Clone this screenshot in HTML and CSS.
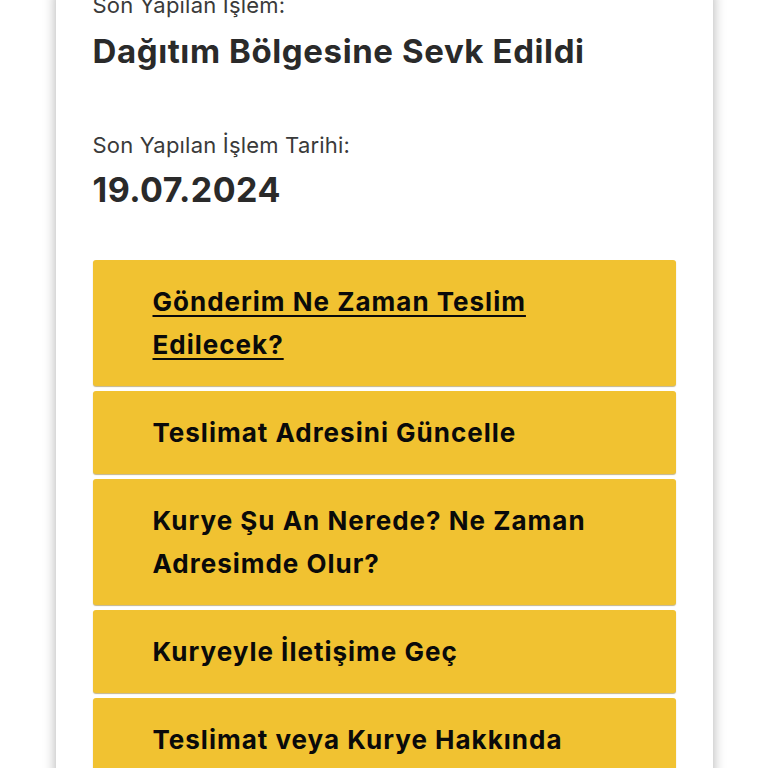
FILE: index.html
```html
<!DOCTYPE html>
<html lang="tr">
<head>
<meta charset="utf-8">
<title>Gönderi Takip</title>
<link rel="stylesheet" href="styles.css">
</head>
<body>
<main class="card">
  <section class="info">
    <div class="field">
      <div class="label">Son Yapılan İşlem:</div>
      <div class="value">Dağıtım Bölgesine Sevk Edildi</div>
    </div>
    <div class="field">
      <div class="label">Son Yapılan İşlem Tarihi:</div>
      <div class="value date">19.07.2024</div>
    </div>
  </section>
  <nav class="actions">
    <a class="action link" href="#">Gönderim Ne Zaman Teslim Edilecek?</a>
    <a class="action" href="#">Teslimat Adresini Güncelle</a>
    <a class="action" href="#">Kurye Şu An Nerede? Ne Zaman Adresimde Olur?</a>
    <a class="action" href="#">Kuryeyle İletişime Geç</a>
    <a class="action" href="#">Teslimat veya Kurye Hakkında</a>
  </nav>
</main>
</body>
</html>
```

FILE: styles.css
```css
html, body {
  margin: 0;
  padding: 0;
  background: #ffffff;
}

body {
  font-family: Inter, "Noto Sans", "DejaVu Sans", sans-serif;
  overflow: hidden;
  height: 768px;
}

.card {
  width: 583px;
  margin: -9px auto 0;
  padding: 0 37px 40px;
  background: #ffffff;
  box-shadow: 0 0 12px rgba(0, 0, 0, 0.32);
  min-height: 900px;
}

.info {
  display: flex;
  flex-direction: column;
  gap: 60px;
}

.field {
  display: flex;
  flex-direction: column;
}

.label {
  font-size: 22px;
  line-height: 28px;
  letter-spacing: 0.2px;
  color: #3a3a3a;
  font-weight: 400;
}

.value {
  margin-top: 12px;
  font-size: 33px;
  line-height: 40px;
  letter-spacing: 0.6px;
  font-weight: 700;
  color: #2a2a2a;
}

.value.date {
  margin-top: 11px;
  font-size: 34px;
  letter-spacing: 0.5px;
}

.actions {
  margin-top: 50px;
  display: flex;
  flex-direction: column;
  gap: 5px;
}

.action {
  display: block;
  padding: 20px 40px 20px 60px;
  background: #f1c231;
  border-radius: 3px;
  box-shadow: 0 1px 1px rgba(120, 90, 0, 0.45);
  color: #0a0a0a;
  font-size: 26px;
  line-height: 43px;
  letter-spacing: 1px;
  font-weight: 700;
  text-decoration: none;
}

.action.link {
  text-decoration: underline;
  text-decoration-thickness: 2px;
  text-underline-offset: 4px;
}
```
